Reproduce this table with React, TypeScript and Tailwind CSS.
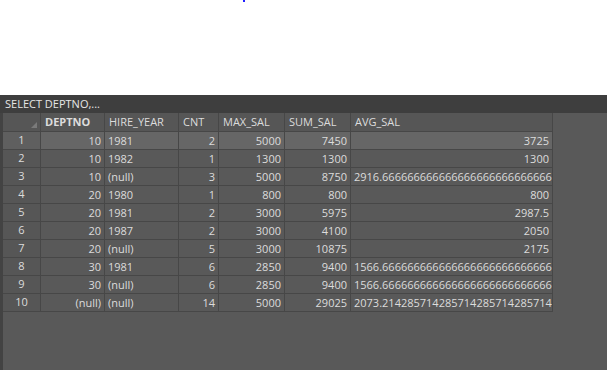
const columns = [
  { key: "DEPTNO", width: "w-[64px]", bold: true },
  { key: "HIRE_YEAR", width: "w-[74px]" },
  { key: "CNT", width: "w-[40px]" },
  { key: "MAX_SAL", width: "w-[66px]" },
  { key: "SUM_SAL", width: "w-[66px]" },
  { key: "AVG_SAL", width: "w-[202px]" },
];

type Cell = { text: string; right?: boolean };

const r = (text: string): Cell => ({ text, right: true });
const l = (text: string): Cell => ({ text });

const rows: Cell[][] = [
  [r("10"), l("1981"), r("2"), r("5000"), r("7450"), r("3725")],
  [r("10"), l("1982"), r("1"), r("1300"), r("1300"), r("1300")],
  [r("10"), l("(null)"), r("3"), r("5000"), r("8750"), r("2916.6666666666666666666666666666667")],
  [r("20"), l("1980"), r("1"), r("800"), r("800"), r("800")],
  [r("20"), l("1981"), r("2"), r("3000"), r("5975"), r("2987.5")],
  [r("20"), l("1987"), r("2"), r("3000"), r("4100"), r("2050")],
  [r("20"), l("(null)"), r("5"), r("3000"), r("10875"), r("2175")],
  [r("30"), l("1981"), r("6"), r("2850"), r("9400"), r("1566.6666666666666666666666666666667")],
  [r("30"), l("(null)"), r("6"), r("2850"), r("9400"), r("1566.6666666666666666666666666666667")],
  [r("(null)"), l("(null)"), r("14"), r("5000"), r("29025"), r("2073.2142857142857142857142857142857")],
];

export default function App() {
  return (
    <div className="flex h-[370px] w-[607px] flex-col overflow-hidden bg-white font-['Open_Sans',sans-serif] text-[11px] text-[#dcdcdc]">
      <div className="h-[95px] shrink-0 pl-[243px]">
        <div className="h-[2px] w-[2px] bg-[#2020ff]" />
      </div>
      <div className="flex h-[18px] shrink-0 items-center bg-[#3e3e3e] pl-[5px] text-[#e6e6e6]">
        SELECT DEPTNO,...
      </div>
      <div className="flex-1 border-l-[3px] border-[#434343] bg-[#595959]">
        <div className="flex h-[19px] border-b border-[#474747] bg-[#565656] w-fit">
          <div className="relative w-[38px] border-r border-[#474747]">
            <div className="absolute right-[3px] bottom-[3px] h-0 w-0 border-b-[6px] border-l-[6px] border-b-[#7a7a7a] border-l-transparent" />
          </div>
          {columns.map((c) => (
            <div
              key={c.key}
              className={`${c.width} flex items-center border-r border-[#474747] px-[4px] ${c.bold ? "font-bold" : ""}`}
            >
              {c.key}
            </div>
          ))}
        </div>
        {rows.map((row, i) => (
          <div
            key={i}
            className={`flex h-[18px] w-fit border-b border-[#474747] ${i === 0 ? "bg-[#666666]" : "bg-[#595959]"}`}
          >
            <div
              className={`flex w-[38px] items-center justify-center border-r border-[#474747] ${i === 0 ? "bg-[#5f5f5f]" : "bg-[#565656]"}`}
            >
              {i + 1}
            </div>
            {row.map((cell, j) => (
              <div
                key={j}
                className={`${columns[j].width} overflow-hidden whitespace-nowrap border-r border-[#474747] px-[3px] leading-[17px] ${cell.right ? "text-right" : "text-left"}`}
              >
                {cell.text}
              </div>
            ))}
          </div>
        ))}
      </div>
    </div>
  );
}
